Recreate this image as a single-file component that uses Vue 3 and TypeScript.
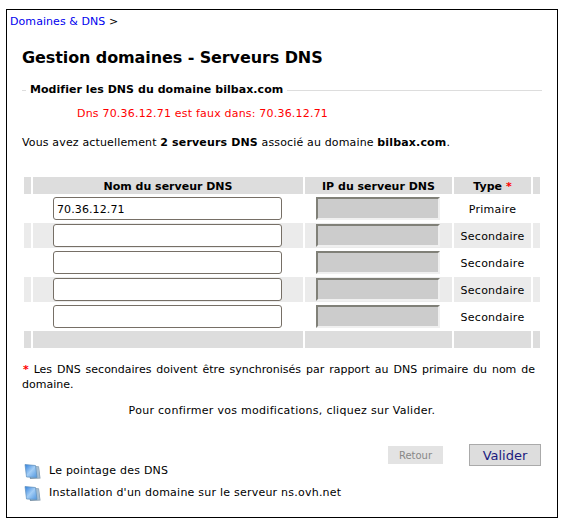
<script setup lang="ts">
interface Row { value: string; type: string }
const rows: Row[] = [
  { value: '70.36.12.71', type: 'Primaire' },
  { value: '', type: 'Secondaire' },
  { value: '', type: 'Secondaire' },
  { value: '', type: 'Secondaire' },
  { value: '', type: 'Secondaire' },
]
const links: string[] = ['Le pointage des DNS', "Installation d'un domaine sur le serveur ns.ovh.net"]
</script>

<template>
  <div class="box">
    <div class="crumb"><a class="crumb-link">Domaines &amp; DNS</a> &gt;</div>
    <h1 class="title">Gestion domaines - Serveurs DNS</h1>
    <fieldset class="group">
      <legend class="legend">Modifier les DNS du domaine bilbax.com</legend>
      <p class="error">Dns 70.36.12.71 est faux dans: 70.36.12.71</p>
      <p class="intro">Vous avez actuellement <b>2 serveurs DNS</b> associé au domaine <b>bilbax.com</b>.</p>
      <table class="grid">
        <thead>
          <tr class="band">
            <th class="c-edge"></th>
            <th class="c-name">Nom du serveur DNS</th>
            <th class="c-ip">IP du serveur DNS</th>
            <th class="c-type">Type <span class="star">*</span></th>
            <th class="c-edge"></th>
          </tr>
        </thead>
        <tbody>
          <tr v-for="(row, i) in rows" :key="i" :class="i % 2 ? 'odd' : 'even'">
            <td></td>
            <td class="cell-name"><input class="field" type="text" :value="row.value" /></td>
            <td class="cell-ip"><input class="field-off" type="text" disabled /></td>
            <td class="cell-type">{{ row.type }}</td>
            <td></td>
          </tr>
        </tbody>
        <tfoot>
          <tr class="band">
            <td></td><td></td><td></td><td></td><td></td>
          </tr>
        </tfoot>
      </table>
      <p class="note"><span class="star note-star">*</span> Les DNS secondaires doivent être synchronisés par rapport au DNS primaire du nom de domaine.</p>
      <p class="confirm">Pour confirmer vos modifications, cliquez sur Valider.</p>
    </fieldset>
    <div class="bottom">
      <ul class="links">
        <li v-for="link in links" :key="link" class="link">
          <svg class="icon" width="17" height="17" viewBox="0 0 17 17" aria-hidden="true">
            <defs>
              <linearGradient id="win" x1="0" y1="0" x2="1" y2="1">
                <stop offset="0" stop-color="#2f7fdc" />
                <stop offset="0.5" stop-color="#a4cef6" />
                <stop offset="1" stop-color="#4f96e0" />
              </linearGradient>
            </defs>
            <path d="M4 2 L15 3.5 L16.5 15.5 L6 16 Z" fill="#7f97ab" />
            <path d="M5 2.6 L14.6 4 L15.8 14.8 L7 15 Z" fill="#a6bed2" />
            <path d="M1 1.5 L11.5 2.5 L13 14.5 L2.5 14 Z" fill="url(#win)" stroke="#5f8fbc" stroke-width="0.7" stroke-linejoin="round" />
          </svg>
          <span>{{ link }}</span>
        </li>
      </ul>
      <div class="actions">
        <button class="btn-back" type="button">Retour</button>
        <button class="btn-ok" type="button">Valider</button>
      </div>
    </div>
  </div>
</template>

<style>
html, body { margin: 0; background: #fff; }
</style>

<style scoped>
.box {
  box-sizing: border-box;
  width: 552px;
  height: 509px;
  margin: 9px 0 0 6px;
  border: 1px solid #000;
  padding: 5px 15px 0 3px;
  font: 11px/14px "DejaVu Sans", sans-serif;
  color: #000;
  position: relative;
}
.crumb { height: 14px; letter-spacing: 0.07px; }
.crumb-link { color: #0000ee; }
.title {
  margin: 19px 0 0 12px;
  font-size: 16px;
  line-height: 20px;
  font-weight: bold;
  letter-spacing: -0.1px;
}
.group {
  margin: 15px 0 0 12px;
  padding: 0;
  border: 0;
  border-top: 1px solid #ddd;
  min-width: 0;
}
.legend {
  margin-left: 4px;
  padding: 0 4px;
  font-weight: bold;
  letter-spacing: 0.05px;
}
.error {
  margin: 10px 0 0 55px;
  color: #f00;
  letter-spacing: 0.2px;
}
.intro { margin: 15px 0 0; letter-spacing: 0.15px; }
.grid {
  margin-top: 25px;
  border-collapse: separate;
  border-spacing: 2px;
  table-layout: fixed;
  width: 520px;
}
.c-edge { width: 7px; }
.c-name { width: 270px; }
.c-ip { width: 147px; }
.c-type { width: 77px; }
th, td { padding: 0; }
.band td { background: #ddd; height: 17px; }
.band th { background: #ddd; height: 15px; padding-top: 2px; }
tbody td { height: 25px; }
.odd td { background: #ebebeb; }
.cell-name { padding-left: 20px; }
.cell-ip { padding-left: 11px; }
tbody .cell-type { text-align: center; letter-spacing: 0.25px; height: 23px; padding-top: 2px; }
.field, .field-off {
  display: block;
  box-sizing: border-box;
  margin: 0;
  height: 23px;
  font: 11px "DejaVu Sans", sans-serif;
}
.field {
  width: 229px;
  padding: 1px 3px 0;
  border: 1px solid #766f66;
  border-radius: 3px;
  background: #fff;
  color: #000;
  letter-spacing: 0.1px;
}
.field-off {
  width: 124px;
  padding: 0;
  border: 2px solid;
  border-color: #808078 #f0f0f0 #f0f0f0 #808078;
  background: #ccc;
}
.star { color: #f00; }
.note-star { font-weight: bold; margin-left: 1px; }
.note { margin: 12px 0 0; width: 513px; text-align: justify; line-height: 15px; }
.confirm { margin: 12px 0 0; text-align: center; letter-spacing: 0.29px; }
.bottom {
  position: absolute;
  left: 17px;
  right: 16px;
  top: 434px;
  display: flex;
  justify-content: space-between;
}
.links { list-style: none; margin: 16px 0 0; padding: 0; letter-spacing: 0.23px; }
.link { display: flex; align-items: center; height: 22px; gap: 8px; }
.icon { display: block; flex: none; }
.actions { display: flex; gap: 26px; align-items: flex-start; }
.btn-back {
  box-sizing: border-box;
  margin-top: 2px;
  width: 55px;
  height: 18px;
  padding: 0;
  border: 0;
  background: #e3e3e3;
  color: #888;
  font: 10px "DejaVu Sans", sans-serif;
}
.btn-ok {
  box-sizing: border-box;
  width: 72px;
  height: 22px;
  padding: 0;
  border: 1px solid #aaa;
  background: #ddd;
  color: #1a1a80;
  font: 13px "DejaVu Sans", sans-serif;
}
</style>
